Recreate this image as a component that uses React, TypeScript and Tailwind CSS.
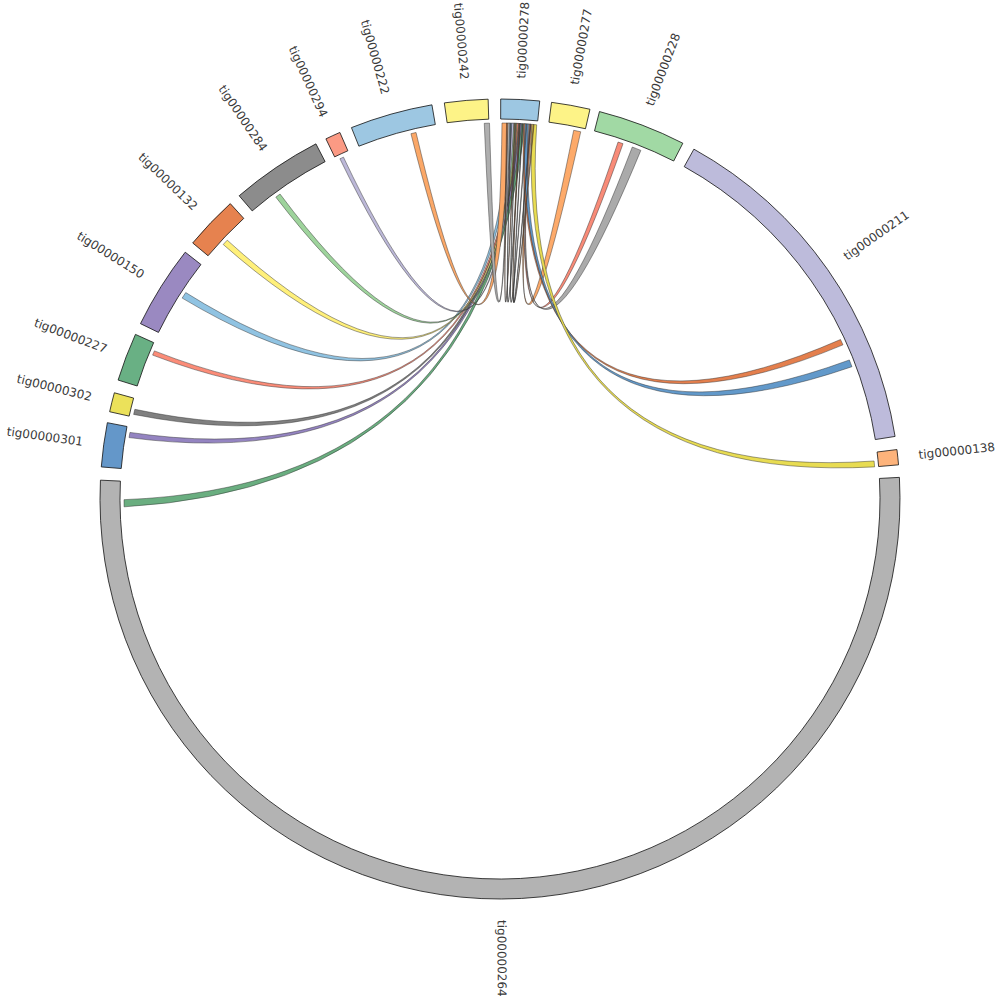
import React from "react";

type TSector = {
  name: string;
  start: number;
  end: number;
  color: string;
};

type TLink = {
  s: [number, number];
  t: [number, number];
  color: string;
};

const CX = 500;
const CY = 499;
const R_OUT = 400;
const R_IN = 380;
const R_LINK = 376;
const R_LABEL = 421;

const sectors: TSector[] = [
  { name: "tig00000264", start: 86.9, end: 272.7, color: "#b3b3b3" },
  { name: "tig00000301", start: -85.4, end: -79.0, color: "#6497c9" },
  { name: "tig00000302", start: -77.4, end: -74.6, color: "#ebe15a" },
  { name: "tig00000227", start: -72.7, end: -65.7, color: "#69b084" },
  { name: "tig00000150", start: -64.0, end: -51.9, color: "#9a89c1" },
  { name: "tig00000132", start: -50.2, end: -42.4, color: "#e6824f" },
  { name: "tig00000284", start: -40.7, end: -27.4, color: "#8c8c8c" },
  { name: "tig00000294", start: -25.8, end: -23.6, color: "#fb9a84" },
  { name: "tig00000222", start: -21.8, end: -9.8, color: "#9dc7e2" },
  { name: "tig00000242", start: -8.0, end: -1.7, color: "#fdf387" },
  { name: "tig00000278", start: 0.1, end: 5.7, color: "#9dc7e2" },
  { name: "tig00000277", start: 7.4, end: 13.0, color: "#fdf387" },
  { name: "tig00000228", start: 14.4, end: 27.2, color: "#a1d9a4" },
  { name: "tig00000211", start: 29.0, end: 81.0, color: "#bdbbdb" },
  { name: "tig00000138", start: 82.9, end: 85.1, color: "#fdb37b" },
];

// every link ends in tig00000278 (target)
const links: TLink[] = [
  { s: [-91.2, -90.1], t: [3.1, 3.8], color: "#6aae80" },
  { s: [-80.6, -79.8], t: [2.8, 3.3], color: "#9484c1" },
  { s: [-77.0, -76.2], t: [2.6, 3.0], color: "#808080" },
  { s: [-67.5, -66.8], t: [2.4, 2.8], color: "#fb8c78" },
  { s: [-57.7, -56.7], t: [1.4, 1.9], color: "#90c3e2" },
  { s: [-47.4, -46.5], t: [2.2, 2.6], color: "#fff07a" },
  { s: [-36.6, -35.8], t: [2.0, 2.4], color: "#9ed39c" },
  { s: [-25.2, -24.6], t: [1.8, 2.1], color: "#bcb8d8" },
  { s: [-13.7, -12.9], t: [0.3, 1.3], color: "#fba868" },
  { s: [-2.4, -1.6], t: [1.2, 1.5], color: "#afafaf" },
  { s: [11.3, 12.4], t: [4.5, 4.9], color: "#fdaa6a" },
  { s: [18.3, 19.1], t: [4.3, 4.7], color: "#f88b78" },
  { s: [20.6, 22.0], t: [4.1, 4.5], color: "#aaaaaa" },
  { s: [64.9, 65.8], t: [3.6, 4.0], color: "#e47f4d" },
  { s: [68.3, 69.4], t: [3.8, 4.3], color: "#6299ca" },
  { s: [84.2, 85.1], t: [4.9, 5.6], color: "#e8dc52" },
  // small loops inside the hub
  { s: [1.0, 1.1], t: [2.2, 2.3], color: "#b0673a" },
  { s: [1.6, 1.7], t: [3.0, 3.1], color: "#666666" },
  { s: [2.4, 2.5], t: [4.0, 4.1], color: "#888888" },
  { s: [2.9, 3.0], t: [5.1, 5.2], color: "#c27a3c" },
  { s: [3.4, 3.5], t: [4.6, 4.7], color: "#555555" },
];

const rad = (a: number) => (a * Math.PI) / 180;

const pt = (a: number, r: number) => {
  const x = CX + r * Math.sin(rad(a));
  const y = CY - r * Math.cos(rad(a));
  return `${x.toFixed(2)} ${y.toFixed(2)}`;
};

const ctrl = (a1: number, a2: number) => {
  const ux = Math.sin(rad(a1)) + Math.sin(rad(a2));
  const uy = -Math.cos(rad(a1)) - Math.cos(rad(a2));
  const len = Math.sqrt(ux * ux + uy * uy) || 1;
  return `${(CX + (18 * ux) / len).toFixed(2)} ${(CY + (18 * uy) / len).toFixed(2)}`;
};

const sectorPath = (s: TSector) => {
  const large = s.end - s.start > 180 ? 1 : 0;
  return (
    `M ${pt(s.start, R_OUT)} A ${R_OUT} ${R_OUT} 0 ${large} 1 ${pt(s.end, R_OUT)} ` +
    `L ${pt(s.end, R_IN)} A ${R_IN} ${R_IN} 0 ${large} 0 ${pt(s.start, R_IN)} Z`
  );
};

const linkPath = (l: TLink) => {
  const [s1, s2] = l.s;
  const [t1, t2] = l.t;
  const r = R_LINK;
  return (
    `M ${pt(s1, r)} A ${r} ${r} 0 0 1 ${pt(s2, r)} ` +
    `Q ${ctrl(s2, t1)} ${pt(t1, r)} ` +
    `A ${r} ${r} 0 0 1 ${pt(t2, r)} ` +
    `Q ${ctrl(t2, s1)} ${pt(s1, r)} Z`
  );
};

const Label = ({ s }: { s: TSector }) => {
  let mid = (s.start + s.end) / 2;
  if (mid > 180) mid -= 360;
  const x = CX + R_LABEL * Math.sin(rad(mid));
  const y = CY - R_LABEL * Math.cos(rad(mid));
  const right = mid >= 0 && mid <= 180;
  const rot = right ? mid - 90 : mid + 90;
  return (
    <text
      x={x}
      y={y}
      transform={`rotate(${rot.toFixed(2)} ${x.toFixed(2)} ${y.toFixed(2)})`}
      textAnchor={right ? "start" : "end"}
      dominantBaseline="central"
      fontSize={12}
      fill="#3a3a3a"
      style={{ fontFamily: '"DejaVu Sans", Verdana, sans-serif' }}
    >
      {s.name}
    </text>
  );
};

const App = () => {
  return (
    <div className="w-[1000px] h-[1000px] bg-white overflow-hidden">
      <svg width={1000} height={1000} viewBox="0 0 1000 1000" className="block">
        <g>
          {links.map((l, i) => (
            <path
              key={i}
              d={linkPath(l)}
              fill={l.color}
              stroke="#2b2b2b"
              strokeOpacity={0.75}
              strokeWidth={0.6}
            />
          ))}
        </g>
        <g>
          {sectors.map((s) => (
            <path
              key={s.name}
              d={sectorPath(s)}
              fill={s.color}
              stroke="#111111"
              strokeWidth={0.8}
            />
          ))}
        </g>
        <g>
          {sectors.map((s) => (
            <Label key={s.name} s={s} />
          ))}
        </g>
      </svg>
    </div>
  );
};

export default App;
